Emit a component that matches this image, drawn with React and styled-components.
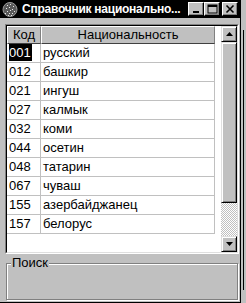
import React from "react";
import styled, { createGlobalStyle } from "styled-components";

const GlobalStyle = createGlobalStyle`
  html, body {
    margin: 0;
    padding: 0;
    background: #c0c0c0;
  }
  body {
    font-family: "Liberation Sans", Arial, sans-serif;
    color: #000;
  }
`;

const rows = [
  ["001", "русский"],
  ["012", "башкир"],
  ["021", "ингуш"],
  ["027", "калмык"],
  ["032", "коми"],
  ["044", "осетин"],
  ["048", "татарин"],
  ["067", "чуваш"],
  ["155", "азербайджанец"],
  ["157", "белорус"],
];

const Screen = styled.div`
  display: flex;
  width: 246px;
  height: 303px;
  overflow: hidden;
`;

const Window = styled.div`
  width: 240px;
  display: flex;
  flex-direction: column;
  background: #c0c0c0;
  border-right: 1px solid #000;
  border-bottom: 1px solid #000;
`;

const TitleBar = styled.div`
  height: 18px;
  background: #000;
  display: flex;
  align-items: center;
  padding: 0 2px 0 2px;
`;

const Title = styled.div`
  flex: 1;
  color: #fff;
  font-weight: bold;
  font-size: 12px;
  letter-spacing: -0.25px;
  margin-left: 4px;
  white-space: nowrap;
  overflow: hidden;
`;

const CapButton = styled.div`
  width: 16px;
  height: 14px;
  box-sizing: border-box;
  margin-left: ${(p) => p.$gap || 0}px;
  background: #c0c0c0;
  border-style: solid;
  border-width: 1px;
  border-color: #fff #000 #000 #fff;
  box-shadow: inset -1px -1px #808080;
  display: flex;
  align-items: center;
  justify-content: center;
`;

const Body = styled.div`
  flex: 1;
  display: flex;
  flex-direction: column;
  padding: 6px 1px 0 5px;
`;

const GridOuter = styled.div`
  width: 234px;
  height: 230px;
  box-sizing: border-box;
  border: 1px solid;
  border-color: #808080 #fff #fff #808080;
`;

const GridInner = styled.div`
  height: 100%;
  box-sizing: border-box;
  border: 1px solid;
  border-color: #000 #dfdfdf #dfdfdf #000;
  background: #fff;
  display: flex;
`;

const TableArea = styled.div`
  flex: 1;
  display: flex;
  flex-direction: column;
`;

const HeaderRow = styled.div`
  display: flex;
  height: 18px;
`;

const HeadCell = styled.div`
  width: ${(p) => p.$w}px;
  box-sizing: border-box;
  background: #c0c0c0;
  border-top: 1px solid #fff;
  border-left: 1px solid #fff;
  border-right: 1px solid #808080;
  border-bottom: 1px solid #404040;
  font-size: 13px;
  line-height: 16px;
  text-align: center;
`;

const Row = styled.div`
  display: flex;
  height: 19px;
`;

const Cell = styled.div`
  width: ${(p) => p.$w}px;
  box-sizing: border-box;
  border-right: 1px solid #c0c0c0;
  border-bottom: 1px solid #c0c0c0;
  padding-left: 2px;
  font-size: 13px;
  line-height: 18px;
  white-space: nowrap;
`;

const Selected = styled.span`
  background: #000;
  color: #fff;
  padding: 1px 1px 1px 0;
`;

const ScrollBar = styled.div`
  width: 16px;
  display: flex;
  flex-direction: column;
`;

const Raised = styled.div`
  height: ${(p) => p.$h}px;
  box-sizing: border-box;
  background: #c0c0c0;
  border: 1px solid;
  border-color: #dfdfdf #000 #000 #dfdfdf;
  box-shadow: inset 1px 1px #fff, inset -1px -1px #808080;
  display: flex;
  align-items: center;
  justify-content: center;
`;

const Track = styled.div`
  flex: 1;
  background: repeating-conic-gradient(#fff 0 25%, #c0c0c0 0 50%) 0 0 / 2px 2px;
`;

const Group = styled.fieldset`
  flex: 1;
  margin: 2px 1px 2px 1px;
  padding: 0;
  min-width: 0;
  border: 1px solid #808080;
  box-shadow: inset 1px 1px #fff, 1px 1px #fff;
`;

const Legend = styled.legend`
  margin-left: 4px;
  padding: 0 1px;
  font-size: 13px;
  line-height: 14px;
  background: #c0c0c0;
`;

const Strip = styled.div`
  width: 5px;
  background: #c0c0c0;
  display: flex;
  justify-content: center;
`;

const StripLine = styled.div`
  width: 1px;
  margin-top: 30px;
  height: 260px;
  background: #000;
`;

function AppIcon() {
  const dots = [
    [5, 4], [8, 3], [11, 5], [4, 7], [7, 6], [10, 8], [12, 10],
    [5, 10], [8, 9], [3, 12], [7, 12], [10, 12], [6, 14], [9, 14],
  ];
  return (
    <svg width="16" height="16" viewBox="0 0 16 16">
      <circle cx="8" cy="8.5" r="7" fill="#5a5a5a" />
      <circle cx="8" cy="8.5" r="7" fill="none" stroke="#9a9a9a" strokeWidth="1" />
      {dots.map(([x, y], i) => (
        <rect key={i} x={x} y={y} width="1" height="1" fill="#e8e8e8" />
      ))}
    </svg>
  );
}

function Arrow({ down }) {
  return (
    <svg width="7" height="4" viewBox="0 0 7 4">
      <path d={down ? "M0 0H7L3.5 4Z" : "M3.5 0L7 4H0Z"} fill="#000" />
    </svg>
  );
}

export default function App() {
  return (
    <>
      <GlobalStyle />
      <Screen>
        <Window>
          <TitleBar>
            <AppIcon />
            <Title>Справочник национально...</Title>
            <CapButton>
              <svg width="12" height="10" viewBox="0 0 12 10">
                <rect x="3" y="7" width="6" height="2" fill="#000" />
              </svg>
            </CapButton>
            <CapButton>
              <svg width="12" height="10" viewBox="0 0 12 10">
                <rect x="2" y="1" width="9" height="8" fill="none" stroke="#000" />
                <rect x="2" y="1" width="9" height="2" fill="#000" />
              </svg>
            </CapButton>
            <CapButton $gap={2}>
              <svg width="12" height="10" viewBox="0 0 12 10">
                <path d="M2.5 1.5L9.5 8.5M9.5 1.5L2.5 8.5" stroke="#000" strokeWidth="1.6" />
              </svg>
            </CapButton>
          </TitleBar>
          <Body>
            <GridOuter>
              <GridInner>
                <TableArea>
                  <HeaderRow>
                    <HeadCell $w={34}>Код</HeadCell>
                    <HeadCell $w={174}>Национальность</HeadCell>
                  </HeaderRow>
                  {rows.map(([code, name], i) => (
                    <Row key={code}>
                      <Cell $w={34}>{i === 0 ? <Selected>{code}</Selected> : code}</Cell>
                      <Cell $w={174}>{name}</Cell>
                    </Row>
                  ))}
                </TableArea>
                <ScrollBar>
                  <Raised $h={16}>
                    <Arrow />
                  </Raised>
                  <Raised $h={161} />
                  <Track />
                  <Raised $h={16}>
                    <Arrow down />
                  </Raised>
                </ScrollBar>
              </GridInner>
            </GridOuter>
            <Group>
              <Legend>Поиск</Legend>
            </Group>
          </Body>
        </Window>
        <Strip>
          <StripLine />
        </Strip>
      </Screen>
    </>
  );
}
